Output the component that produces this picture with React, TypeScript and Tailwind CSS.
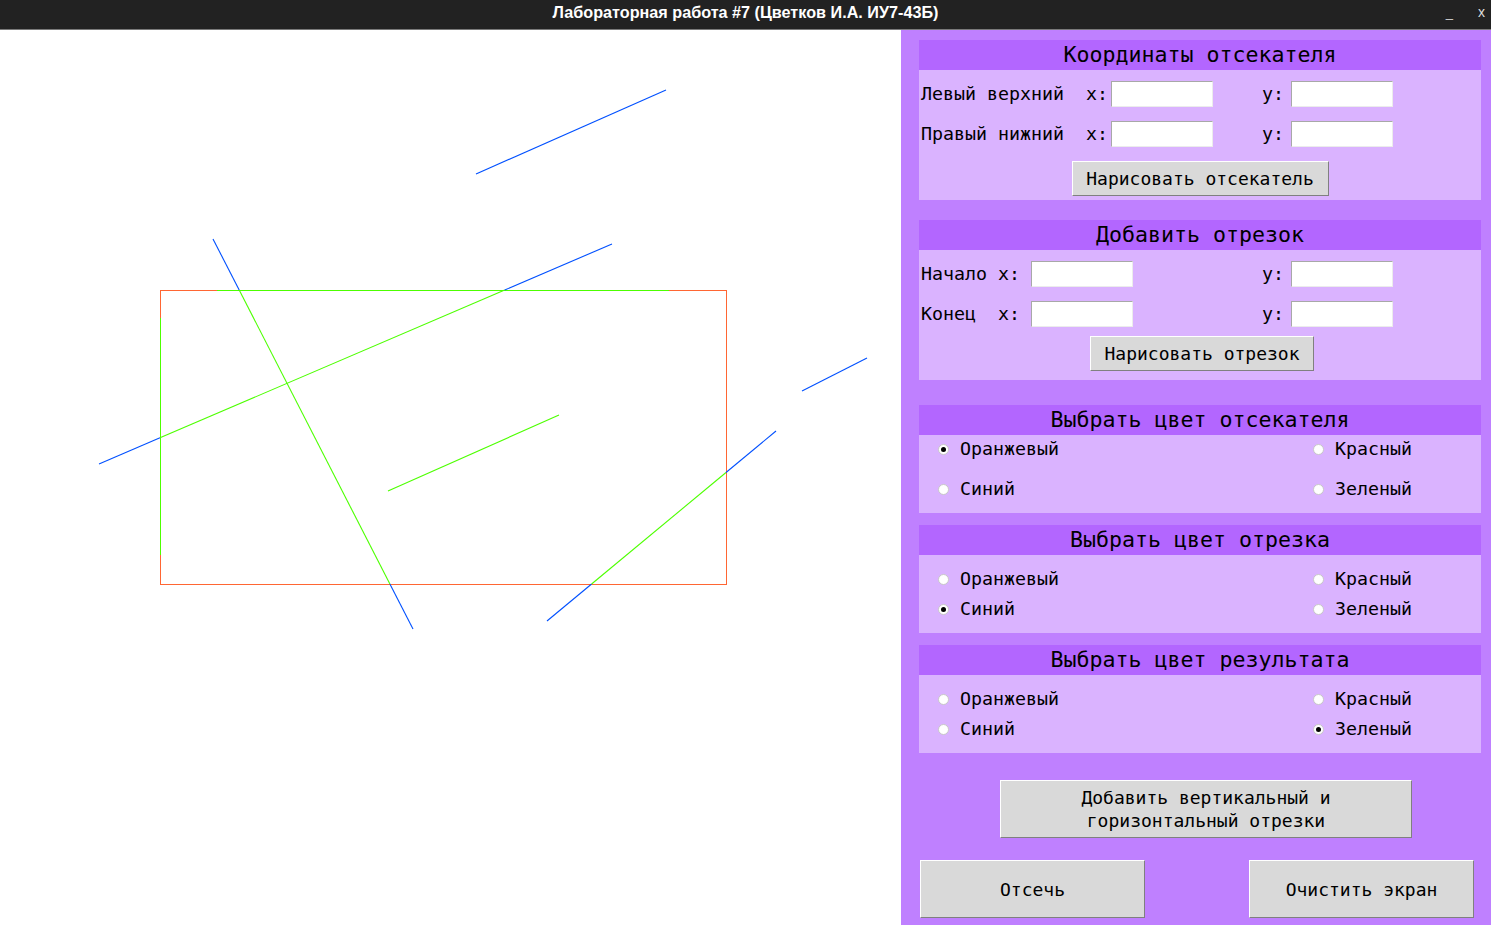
const mono = { fontFamily: '"DejaVu Sans Mono", "Liberation Mono", monospace' };

const BLUE = "#0050ff";
const GREEN = "#4dff00";
const ORANGE = "#ff6633";

// segments in page coords, viewBox starts at y=30
const segments: { x1: number; y1: number; x2: number; y2: number; c: string }[] = [
  { x1: 476, y1: 174, x2: 666, y2: 90, c: BLUE },
  { x1: 99, y1: 464, x2: 160, y2: 437.8, c: BLUE },
  { x1: 160, y1: 437.8, x2: 504.7, y2: 290, c: GREEN },
  { x1: 504.7, y1: 290, x2: 612, y2: 244, c: BLUE },
  { x1: 213, y1: 239, x2: 239.2, y2: 290, c: BLUE },
  { x1: 239.2, y1: 290, x2: 389.9, y2: 584, c: GREEN },
  { x1: 389.9, y1: 584, x2: 413, y2: 629, c: BLUE },
  { x1: 388, y1: 491, x2: 559, y2: 415, c: GREEN },
  { x1: 802, y1: 391, x2: 867, y2: 358, c: BLUE },
  { x1: 547, y1: 621, x2: 591.6, y2: 584, c: BLUE },
  { x1: 591.6, y1: 584, x2: 726, y2: 472.5, c: GREEN },
  { x1: 726, y1: 472.5, x2: 776, y2: 431, c: BLUE },
];

const Header = ({ title }: { title: string }) => (
  <div className="h-[30px] bg-[#b366ff] flex items-center justify-center text-[21.6px] text-black leading-none">
    {title}
  </div>
);

const Field = () => (
  <input
    className="w-[102px] h-[26px] bg-white border border-t-[#a8a8a8] border-l-[#a8a8a8] border-b-[#ececec] border-r-[#ececec] outline-none"
    defaultValue=""
  />
);

const TkButton = ({ children, className }: { children: React.ReactNode; className: string }) => (
  <button
    className={
      "bg-[#d9d9d9] border border-t-white border-l-white border-b-[#808080] border-r-[#808080] text-[18px] text-black leading-[23px] flex flex-col items-center justify-center " +
      className
    }
  >
    {children}
  </button>
);

const Radio = ({ label, checked }: { label: string; checked?: boolean }) => (
  <div className="flex items-center h-[20px]">
    <span className="w-[11px] h-[11px] rounded-full bg-white border border-[#c8c8c8] flex items-center justify-center">
      {checked && <span className="w-[5px] h-[5px] rounded-full bg-black" />}
    </span>
    <span className="ml-[11px] text-[18.3px] leading-none text-black">{label}</span>
  </div>
);

const RadioGroup = ({ title, checked, wide }: { title: string; checked: string; wide?: boolean }) => (
  <div>
    <Header title={title} />
    <div
      className={
        "bg-[#dab3ff] h-[78px] pl-[19px] grid grid-cols-[375px_1fr] content-start " +
        (wide ? "pt-[4px] gap-y-[20px]" : "pt-[14px] gap-y-[10px]")
      }
    >
      <Radio label="Оранжевый" checked={checked === "orange"} />
      <Radio label="Красный" checked={checked === "red"} />
      <Radio label="Синий" checked={checked === "blue"} />
      <Radio label="Зеленый" checked={checked === "green"} />
    </div>
  </div>
);

export default function App() {
  return (
    <div className="w-[1491px] h-[925px] flex flex-col overflow-hidden bg-white" style={mono}>
      {/* title bar */}
      <div className="h-[30px] bg-[#222222] border-b border-[#7a7a7a] flex items-start pt-[2px] relative">
        <div
          className="flex-1 text-center text-white font-bold text-[16.2px] leading-[20px]"
          style={{ fontFamily: '"Liberation Sans", Arial, sans-serif' }}
        >
          Лабораторная работа #7 (Цветков И.А. ИУ7-43Б)
        </div>
        <span
          className="absolute right-[38px] top-[3px] text-[13px] text-[#dddddd]"
          style={{ fontFamily: '"Liberation Sans", Arial, sans-serif' }}
        >
          _
        </span>
        <span
          className="absolute right-[6px] top-[2px] text-[14px] text-[#dddddd]"
          style={{ fontFamily: '"Liberation Sans", Arial, sans-serif' }}
        >
          x
        </span>
      </div>

      <div className="flex flex-1">
        {/* canvas */}
        <div className="w-[901px] h-[895px] bg-white">
          <svg width="901" height="895" viewBox="0 30 901 895">
            <rect x="160.5" y="290.5" width="566" height="294" fill="none" stroke={ORANGE} strokeWidth="1" shapeRendering="crispEdges" />
            <line x1="216.7" y1="290.5" x2="669.3" y2="290.5" stroke={GREEN} strokeWidth="1" shapeRendering="crispEdges" />
            <line x1="160.5" y1="318" x2="160.5" y2="555" stroke={GREEN} strokeWidth="1" shapeRendering="crispEdges" />
            {segments.map((s, i) => (
              <line key={i} x1={s.x1} y1={s.y1} x2={s.x2} y2={s.y2} stroke={s.c} strokeWidth="1.1" />
            ))}
          </svg>
        </div>

        {/* control panel */}
        <div className="flex-1 bg-[#bf80ff] pl-[18px] pr-[10px] pt-[10px] flex flex-col">
          {/* clipper coords */}
          <div>
            <Header title="Координаты отсекателя" />
            <div className="bg-[#dab3ff] h-[130px] pt-[11px] flex flex-col text-[18.3px] text-black">
              <div className="flex items-center h-[26px] pl-[2px]">
                <span className="w-[190px] whitespace-pre">Левый верхний  x:</span>
                <Field />
                <span className="ml-[49px] w-[29px]">y:</span>
                <Field />
              </div>
              <div className="flex items-center h-[26px] pl-[2px] mt-[14px]">
                <span className="w-[190px] whitespace-pre">Правый нижний  x:</span>
                <Field />
                <span className="ml-[49px] w-[29px]">y:</span>
                <Field />
              </div>
              <div className="flex justify-center mt-[14px]">
                <TkButton className="w-[257px] h-[35px]">Нарисовать отсекатель</TkButton>
              </div>
            </div>
          </div>

          {/* add segment */}
          <div className="mt-[20px]">
            <Header title="Добавить отрезок" />
            <div className="bg-[#dab3ff] h-[130px] pt-[11px] flex flex-col text-[18.3px] text-black">
              <div className="flex items-center h-[26px] pl-[2px]">
                <span className="w-[110px] whitespace-pre">Начало x:</span>
                <Field />
                <span className="ml-[129px] w-[29px]">y:</span>
                <Field />
              </div>
              <div className="flex items-center h-[26px] pl-[2px] mt-[14px]">
                <span className="w-[110px] whitespace-pre">Конец  x:</span>
                <Field />
                <span className="ml-[129px] w-[29px]">y:</span>
                <Field />
              </div>
              <div className="flex justify-center mt-[9px] pl-[4px]">
                <TkButton className="w-[224px] h-[35px]">Нарисовать отрезок</TkButton>
              </div>
            </div>
          </div>

          <div className="mt-[25px]">
            <RadioGroup title="Выбрать цвет отсекателя" checked="orange" wide />
          </div>
          <div className="mt-[12px]">
            <RadioGroup title="Выбрать цвет отрезка" checked="blue" />
          </div>
          <div className="mt-[12px]">
            <RadioGroup title="Выбрать цвет результата" checked="green" />
          </div>

          <div className="mt-[27px] flex pl-[81px]">
            <TkButton className="w-[412px] h-[58px]">
              <span>Добавить вертикальный и</span>
              <span>горизонтальный отрезки</span>
            </TkButton>
          </div>

          <div className="mt-[22px] flex justify-between pl-[1px] pr-[7px]">
            <TkButton className="w-[225px] h-[58px]">Отсечь</TkButton>
            <TkButton className="w-[225px] h-[58px]">Очистить экран</TkButton>
          </div>
        </div>
      </div>
    </div>
  );
}
